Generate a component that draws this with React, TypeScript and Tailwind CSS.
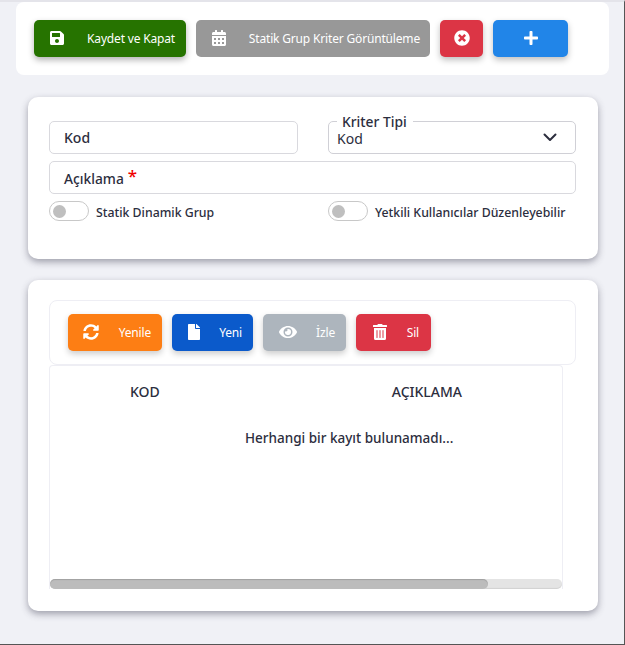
import React from "react";
import { FaSave, FaCalendarAlt, FaTimesCircle, FaPlus, FaSyncAlt, FaFile, FaEye, FaTrashAlt } from "react-icons/fa";

function Btn({ cls, icon, label }: { cls: string; icon: React.ReactNode; label?: string }) {
  return (
    <button className={`h-[37px] rounded-[5px] flex items-center text-white text-[12px] tracking-[-0.17px] ${cls}`}>
      <span className="flex mb-[2px]">{icon}</span>
      {label && <span className="ml-auto whitespace-nowrap">{label}</span>}
    </button>
  );
}

function Toggle({ label }: { label: string }) {
  return (
    <div className="flex items-start gap-[7px]">
      <span className="w-[40px] h-[20px] rounded-full border border-[#c8c8c8] bg-white flex items-center pl-[3px] shrink-0">
        <span className="w-[13px] h-[13px] rounded-full bg-[#bfbfbf]" />
      </span>
      <span className="text-[12.3px] leading-[17px] pt-[3px] font-medium text-[#2c2e3e]">{label}</span>
    </div>
  );
}

const shadow = "shadow-[0_3px_7px_rgba(60,60,80,0.45)]";

export default function App() {
  return (
    <div className="w-[625px] h-[645px] bg-[#f0f1f6] border-t-2 border-t-[#e4e4ea] border-r border-r-[#555] border-b border-b-[#555] font-['Noto_Sans','Open_Sans',sans-serif] overflow-hidden">
      <div className="ml-[16px] w-[593px] h-[73px] bg-white rounded-[8px] pl-[18px] pt-[18px] flex gap-[10px] items-start">
        <Btn cls="w-[152px] bg-[#267300] pl-[15px] pr-[11px] shadow-[0_3px_6px_rgba(0,0,0,0.3)]" icon={<FaSave size={16} />} label="Kaydet ve Kapat" />
        <Btn cls="w-[234px] bg-[#989898] pl-[15px] pr-[10px]" icon={<FaCalendarAlt size={16} />} label="Statik Grup Kriter Görüntüleme" />
        <Btn cls="w-[43px] bg-[#dc3545] justify-center shadow-[0_3px_6px_rgba(0,0,0,0.25)]" icon={<FaTimesCircle size={16} />} />
        <Btn cls="w-[75px] bg-[#2185e8] justify-center shadow-[0_3px_6px_rgba(0,0,0,0.25)]" icon={<FaPlus size={16} />} />
      </div>

      <div className={`ml-[28px] mt-[22px] w-[570px] h-[162px] bg-white rounded-[10px] ${shadow} px-[21px] pt-[24px]`}>
        <div className="flex gap-[30px]">
          <div className="w-[249px] h-[33px] border border-[#d9d9de] rounded-[5px] pl-[14px] flex items-center text-[14px] font-medium text-[#2c2e3e]">Kod</div>
          <div className="relative w-[248px] h-[33px] border border-[#d0d0d6] rounded-[5px] pl-[8px] pt-[7px] text-[14px] leading-[19px] text-[#2c2e3e]">
            Kod
            <span className="absolute left-[8px] top-[-8px] bg-white pl-[5px] pr-[6px] text-[13.8px] leading-[16px] font-medium text-[#2c2e3e]">Kriter Tipi</span>
            <svg width="14" height="9" viewBox="0 0 14 9" className="absolute right-[18px] top-[11px]" fill="none" stroke="#2c2e3e" strokeWidth="2" strokeLinecap="round" strokeLinejoin="round"><path d="M1.5 1.5 7 7l5.5-5.5" /></svg>
          </div>
        </div>
        <div className="mt-[7px] w-[527px] h-[33px] border border-[#d9d9de] rounded-[5px] pl-[14px] pt-[7px] flex items-start text-[13.8px] leading-[19px] font-medium text-[#2c2e3e]">
          Açıklama <span className="text-[#f00000] ml-[4px] mt-[-2px] text-[17px] leading-[18px]">*</span>
        </div>
        <div className="mt-[7px] flex">
          <div className="w-[279px]"><Toggle label="Statik Dinamik Grup" /></div>
          <Toggle label="Yetkili Kullanıcılar Düzenleyebilir" />
        </div>
      </div>

      <div className={`ml-[28px] mt-[21px] w-[570px] h-[331px] bg-white rounded-[10px] ${shadow} px-[21px] pt-[20px]`}>
        <div className="w-[527px] h-[65px] border border-[#eeeef4] rounded-[8px] pl-[18px] pt-[13px] flex gap-[10px] items-start">
          <Btn cls="w-[94px] bg-[#fd7e14] pl-[15px] pr-[11px] shadow-[0_3px_6px_rgba(0,0,0,0.2)]" icon={<FaSyncAlt size={16} />} label="Yenile" />
          <Btn cls="w-[81px] bg-[#0b5acb] pl-[14px] pr-[11px] shadow-[0_3px_6px_rgba(0,0,0,0.2)]" icon={<FaFile size={16} />} label="Yeni" />
          <Btn cls="w-[83px] bg-[#adb5bd] pl-[16px] pr-[11px] shadow-[0_3px_6px_rgba(0,0,0,0.2)]" icon={<FaEye className="w-[18px] h-[16px]" />} label="İzle" />
          <Btn cls="w-[75px] bg-[#dc3545] pl-[16px] pr-[12px] shadow-[0_3px_6px_rgba(0,0,0,0.2)]" icon={<FaTrashAlt size={16} />} label="Sil" />
        </div>
        <div className="w-[514px] h-[224px] border-x border-t border-[#eeeef4] rounded-t-[4px] flex flex-col text-[#2c2e3e]">
          <div className="flex h-[63px] pt-[16px] text-[14px] font-medium leading-[19px]">
            <span className="ml-[80px]">KOD</span>
            <span className="ml-[232px]">AÇIKLAMA</span>
          </div>
          <div className="ml-[195px] text-[13.5px] font-medium leading-[18px]">Herhangi bir kayıt bulunamadı...</div>
          <div className="mt-auto h-[10px] rounded-full bg-[#e4e4e4] shadow-[inset_0_-1px_1px_rgba(0,0,0,0.08)]">
            <div className="w-[438px] h-full rounded-full bg-[#bcbcbc] shadow-[inset_0_1px_1px_rgba(0,0,0,0.15)]" />
          </div>
        </div>
      </div>
    </div>
  );
}
